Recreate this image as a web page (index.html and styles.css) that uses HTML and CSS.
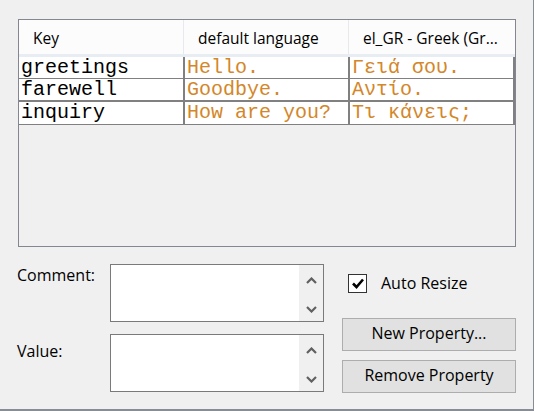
FILE: index.html
```
<!DOCTYPE html>
<html>
<head>
<meta charset="utf-8">
<link rel="stylesheet" href="styles.css">
</head>
<body>
<div class="window">
  <div class="table">
    <div class="thead">
      <div class="th">Key</div>
      <div class="th">default language</div>
      <div class="th last">el_GR - Greek (Gr...</div>
    </div>
    <div class="row r1">
      <div class="td key">greetings</div>
      <div class="td val">Hello.</div>
      <div class="td val">Γειά σου.</div>
    </div>
    <div class="row r2">
      <div class="td key">farewell</div>
      <div class="td val">Goodbye.</div>
      <div class="td val">Αντίο.</div>
    </div>
    <div class="row r3">
      <div class="td key">inquiry</div>
      <div class="td val">How are you?</div>
      <div class="td val">Τι κάνεις;</div>
    </div>
  </div>
  <div class="editor">
    <div class="fields">
      <div class="lbl lbl-comment">Comment:</div>
      <div class="textbox">
        <div class="sb">
          <svg class="chev" width="11" height="7" viewBox="0 0 11 7"><polyline points="1,6 5.5,1.5 10,6"/></svg>
          <svg class="chev" width="11" height="7" viewBox="0 0 11 7"><polyline points="1,1 5.5,5.5 10,1"/></svg>
        </div>
      </div>
      <div class="lbl lbl-value">Value:</div>
      <div class="textbox">
        <div class="sb">
          <svg class="chev" width="11" height="7" viewBox="0 0 11 7"><polyline points="1,6 5.5,1.5 10,6"/></svg>
          <svg class="chev" width="11" height="7" viewBox="0 0 11 7"><polyline points="1,1 5.5,5.5 10,1"/></svg>
        </div>
      </div>
    </div>
    <div class="actions">
      <div class="check">
        <span class="box"><svg width="16" height="16" viewBox="0 0 16 16"><polyline points="3,8.5 6.5,12 13,4.5"/></svg></span>
        <span>Auto Resize</span>
      </div>
      <div class="btn btn-new">New Property...</div>
      <div class="btn btn-remove">Remove Property</div>
    </div>
  </div>
</div>
</body>
</html>
```
FILE: styles.css
```
html, body {
  margin: 0;
  padding: 0;
}
body {
  background: #f0f0f0;
  font-family: "Open Sans", "Noto Sans", sans-serif;
  font-size: 16px;
  color: #000;
}
.window {
  box-sizing: border-box;
  width: 534px;
  height: 411px;
  border-right: 1px solid #888c94;
  border-bottom: 2px solid #888c94;
  padding: 19px 0 0 17px;
}
.table {
  margin-left: 1px;
  width: 498px;
  height: 228px;
  box-sizing: border-box;
  border: 1px solid #828790;
  background: #f0f0f0;
}
.thead {
  display: grid;
  grid-template-columns: 165px 165px 166px;
  height: 37px;
  box-sizing: border-box;
  background: #fcfcfd;
  border-bottom: 3px solid #e8edf4;
}
.th {
  box-sizing: border-box;
  padding: 8px 0 0 14px;
  font-size: 15.5px;
  line-height: 20px;
  white-space: nowrap;
  overflow: hidden;
  border-right: 1px solid #e6e9ee;
}
.th.last {
  border-right: 0;
}
.row {
  display: grid;
  grid-template-columns: 166px 165px 165px;
  background: #fff;
  box-sizing: border-box;
  height: 22px;
  border-bottom: 1px solid #808080;
}
.row.r2 {
  height: 23px;
  border-bottom-width: 2px;
}
.row.r3 {
  height: 23px;
}
.td {
  box-sizing: border-box;
  border-right: 2px solid #808080;
  font-family: "Liberation Mono", "DejaVu Sans Mono", monospace;
  font-size: 20px;
  line-height: 22px;
  padding-left: 2px;
  white-space: nowrap;
  overflow: hidden;
}
.td.key {
  color: #000;
}
.td.val {
  color: #d3872a;
}
.editor {
  display: flex;
  margin-top: 17px;
}
.fields {
  display: grid;
  grid-template-columns: 93px 214px;
  row-gap: 11px;
}
.lbl {
  line-height: 20px;
}
.lbl-comment {
  padding-top: 1px;
}
.lbl-value {
  padding-top: 7px;
}
.textbox {
  box-sizing: border-box;
  height: 58px;
  border: 1px solid #7a7a7a;
  background: #fff;
  display: flex;
  justify-content: flex-end;
}
.sb {
  box-sizing: border-box;
  width: 24px;
  background: #f0f0f0;
  display: flex;
  flex-direction: column;
  justify-content: space-between;
  align-items: center;
  padding: 12px 0 8px;
}
.chev polyline {
  fill: none;
  stroke: #606060;
  stroke-width: 2.2;
}
.actions {
  margin-left: 18px;
  width: 174px;
  display: flex;
  flex-direction: column;
}
.check {
  display: flex;
  align-items: center;
  height: 20px;
  margin: 9px 0 0 6px;
  gap: 14px;
}
.box {
  box-sizing: border-box;
  width: 19px;
  height: 19px;
  border: 1px solid #333;
  background: #fff;
  display: flex;
  align-items: center;
  justify-content: center;
}
.box polyline {
  fill: none;
  stroke: #000;
  stroke-width: 2.6;
}
.btn {
  box-sizing: border-box;
  height: 33px;
  border: 1px solid #adadad;
  background: #e1e1e1;
  text-align: center;
  line-height: 20px;
  padding-top: 4px;
}
.btn-new {
  margin-top: 25px;
}
.btn-remove {
  margin-top: 9px;
}
```
